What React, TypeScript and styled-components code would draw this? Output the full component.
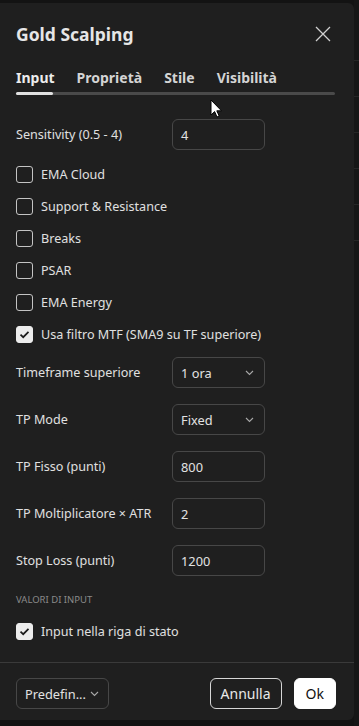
import styled, { createGlobalStyle } from "styled-components";

const GlobalStyle = createGlobalStyle`
  html, body {
    margin: 0;
    padding: 0;
    background: #131313;
  }
  body {
    font-family: "Noto Sans", "Open Sans", sans-serif;
    color: #dbdbdb;
  }
`;

const Page = styled.div`
  display: flex;
  height: 726px;
  width: 359px;
  overflow: hidden;
  position: relative;
`;

const Dialog = styled.div`
  width: 354px;
  height: 717px;
  margin-top: 3px;
  background: #1f1f1f;
  border-radius: 0 6px 6px 0;
  display: flex;
  flex-direction: column;
`;

const Backdrop = styled.div`
  flex: 1;
  background: #161616;
  display: flex;
  flex-direction: column;
  gap: 35px;
  padding-top: 60px;
`;

const BackdropLine = styled.div`
  height: 1px;
  background: #262626;
`;

const Header = styled.div`
  display: flex;
  align-items: center;
  justify-content: space-between;
  height: 40px;
  margin-top: 11px;
  padding: 0 22px 0 16px;
`;

const Title = styled.h2`
  margin: 0;
  font-size: 17.5px;
  font-weight: 700;
  color: #e6e6e6;
`;

const CloseButton = styled.button`
  background: none;
  border: none;
  padding: 0;
  width: 18px;
  height: 18px;
  display: flex;
  align-items: center;
  justify-content: center;
  cursor: pointer;
`;

const Tabs = styled.div`
  display: flex;
  gap: 22px;
  height: 22px;
  align-items: center;
  margin-top: 12px;
  padding: 0 16px;
`;

const Tab = styled.div<{ $active?: boolean }>`
  font-size: 14px;
  font-weight: 700;
  color: ${(p) => (p.$active ? "#ececec" : "#d4d4d4")};
`;

const Track = styled.div`
  margin: 4px 19px 0 16px;
  height: 3px;
  border-radius: 2px;
  background: #4a4a4a;
  display: flex;
`;

const TrackFill = styled.div`
  width: 37px;
  background: #e0e0e0;
  border-radius: 2px;
`;

const Content = styled.div`
  padding: 0 16px;
  display: flex;
  flex-direction: column;
`;

const FieldRow = styled.div<{ $mt: number }>`
  display: grid;
  grid-template-columns: 156px 93px;
  align-items: center;
  height: 31px;
  margin-top: ${(p) => p.$mt}px;
`;

const Label = styled.span`
  font-size: 12.6px;
  color: #e0e0e0;
  white-space: nowrap;
`;

const Field = styled.div`
  box-sizing: border-box;
  height: 31px;
  border: 1px solid #474747;
  border-radius: 6px;
  display: flex;
  align-items: center;
  justify-content: space-between;
  padding: 0 10px 0 8px;
  font-size: 12.8px;
  color: #e2e2e2;
`;

const CheckRow = styled.div<{ $mt?: number }>`
  display: flex;
  align-items: center;
  gap: 8px;
  height: 32px;
  margin-top: ${(p) => p.$mt ?? 0}px;
`;

const Box = styled.div<{ $checked?: boolean }>`
  box-sizing: border-box;
  width: 17px;
  height: 17px;
  border-radius: 3px;
  border: 1px solid ${(p) => (p.$checked ? "#ececec" : "#c4c4c4")};
  background: ${(p) => (p.$checked ? "#ececec" : "transparent")};
  display: flex;
  align-items: center;
  justify-content: center;
`;

const Section = styled.div`
  margin-top: 17px;
  height: 12px;
  font-size: 9.5px;
  color: #8a8a8a;
  display: flex;
  align-items: center;
`;

const Footer = styled.div`
  margin-top: auto;
  border-top: 1px solid #3a3a3a;
  height: 58px;
  padding: 15px 18px 0 16px;
  box-sizing: border-box;
  display: flex;
  align-items: flex-start;
  justify-content: space-between;
`;

const Preset = styled(Field)`
  width: 93px;
  padding: 0 9px 0 8px;
`;

const Buttons = styled.div`
  display: flex;
  gap: 12px;
`;

const Button = styled.button<{ $primary?: boolean }>`
  height: 31px;
  box-sizing: border-box;
  border-radius: 6px;
  font-family: inherit;
  font-size: 14px;
  padding: 0 ${(p) => (p.$primary ? 11 : 10)}px;
  border: 1px solid ${(p) => (p.$primary ? "#ffffff" : "#d6d6d6")};
  background: ${(p) => (p.$primary ? "#ffffff" : "transparent")};
  color: ${(p) => (p.$primary ? "#111111" : "#e8e8e8")};
  cursor: pointer;
`;

const Cursor = styled.svg`
  position: absolute;
  left: 210px;
  top: 99px;
`;

const Chevron = () => (
  <svg width="9" height="6" viewBox="0 0 9 6" fill="none">
    <path d="M1 1l3.5 3.5L8 1" stroke="#a8a8a8" strokeWidth="1.1" />
  </svg>
);

const Check = () => (
  <svg width="11" height="9" viewBox="0 0 11 9" fill="none">
    <path d="M1.5 4.6l2.7 2.6L9.5 1.8" stroke="#1a1a1a" strokeWidth="1.7" />
  </svg>
);

const checks = [
  { label: "EMA Cloud", checked: false },
  { label: "Support & Resistance", checked: false },
  { label: "Breaks", checked: false },
  { label: "PSAR", checked: false },
  { label: "EMA Energy", checked: false },
  { label: "Usa filtro MTF (SMA9 su TF superiore)", checked: true },
];

const fields = [
  { label: "Timeframe superiore", value: "1 ora", select: true },
  { label: "TP Mode", value: "Fixed", select: true },
  { label: "TP Fisso (punti)", value: "800" },
  { label: "TP Moltiplicatore × ATR", value: "2" },
  { label: "Stop Loss (punti)", value: "1200" },
];

const App = () => {
  return (
    <Page>
      <GlobalStyle />
      <Dialog>
        <Header>
          <Title>Gold Scalping</Title>
          <CloseButton aria-label="close">
            <svg width="16" height="16" viewBox="0 0 16 16">
              <path d="M1 1l14 14M15 1L1 15" stroke="#d0d0d0" strokeWidth="1.3" />
            </svg>
          </CloseButton>
        </Header>
        <Tabs>
          <Tab $active>Input</Tab>
          <Tab>Proprietà</Tab>
          <Tab>Stile</Tab>
          <Tab>Visibilità</Tab>
        </Tabs>
        <Track>
          <TrackFill />
        </Track>
        <Content>
          <FieldRow $mt={24}>
            <Label>Sensitivity (0.5 - 4)</Label>
            <Field>4</Field>
          </FieldRow>
          <CheckRow $mt={8}>
            <Box>{null}</Box>
            <Label>{checks[0].label}</Label>
          </CheckRow>
          {checks.slice(1).map((c) => (
            <CheckRow key={c.label}>
              <Box $checked={c.checked}>{c.checked && <Check />}</Box>
              <Label>{c.label}</Label>
            </CheckRow>
          ))}
          {fields.map((f, i) => (
            <FieldRow key={f.label} $mt={i === 0 ? 7 : 16}>
              <Label>{f.label}</Label>
              <Field>
                <span>{f.value}</span>
                {f.select && <Chevron />}
              </Field>
            </FieldRow>
          ))}
          <Section>VALORI DI INPUT</Section>
          <CheckRow $mt={10}>
            <Box $checked>
              <Check />
            </Box>
            <Label>Input nella riga di stato</Label>
          </CheckRow>
        </Content>
        <Footer>
          <Preset>
            <span>Predefin...</span>
            <Chevron />
          </Preset>
          <Buttons>
            <Button>Annulla</Button>
            <Button $primary>Ok</Button>
          </Buttons>
        </Footer>
      </Dialog>
      <Backdrop>
        <BackdropLine />
        <BackdropLine />
        <BackdropLine />
        <BackdropLine />
        <BackdropLine />
        <BackdropLine />
      </Backdrop>
      <Cursor width="12" height="19" viewBox="0 0 12 19">
        <path
          d="M1 1v15l3.6-3.4 2.4 5.4 2.2-1-2.4-5.2H11.5z"
          fill="#ffffff"
          stroke="#000000"
          strokeWidth="1"
        />
      </Cursor>
    </Page>
  );
};

export default App;
